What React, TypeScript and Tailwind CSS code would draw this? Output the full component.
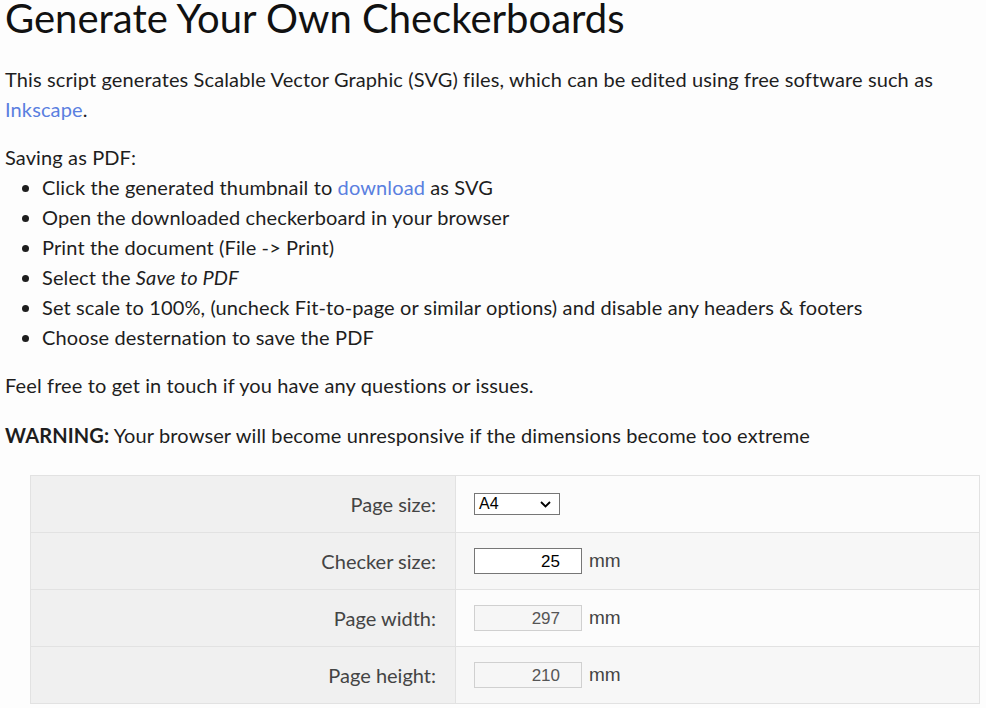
import React from "react";

function Row({ label, children, odd }: { label: string; children: React.ReactNode; odd: boolean }) {
  return (
    <tr className="h-[57px]">
      <td className="w-[425px] border border-[#e2e2e2] bg-[#f0f0f0] pr-[19px] text-right tracking-normal text-[#444]">{label}</td>
      <td className={`border border-[#e2e2e2] pl-[18px] ${odd ? "bg-[#f7f7f7]" : "bg-[#fcfcfc]"}`}>{children}</td>
    </tr>
  );
}

export default function App() {
  return (
    <div className="min-h-screen overflow-hidden bg-[#fdfdfd] font-['Lato',sans-serif] text-[20px] leading-[30px] text-[#1e1e1e]">
      <div className="pl-[5px] tracking-[0.12px]">
        <h1 className="text-[40px] leading-[36px] font-normal tracking-normal text-[#111]">Generate Your Own Checkerboards</h1>
        <p className="mt-[28px]">
          This script generates Scalable Vector Graphic (SVG) files, which can be edited using free software such as
          <br />
          <a className="text-[#5a7fe0]">Inkscape</a>.
        </p>
        <div className="mt-[18px]">Saving as PDF:</div>
        <ul className="list-disc pl-[37px]">
          <li>
            Click the generated thumbnail to <a className="text-[#5a7fe0]">download</a> as SVG
          </li>
          <li>Open the downloaded checkerboard in your browser</li>
          <li>Print the document (File -&gt; Print)</li>
          <li>
            Select the <i>Save to PDF</i>
          </li>
          <li>Set scale to 100%, (uncheck Fit-to-page or similar options) and disable any headers &amp; footers</li>
          <li>Choose desternation to save the PDF</li>
        </ul>
        <p className="mt-[18px]">Feel free to get in touch if you have any questions or issues.</p>
        <p className="mt-[20px]">
          <b>WARNING:</b> Your browser will become unresponsive if the dimensions become too extreme
        </p>
      </div>
      <table className="mt-[25px] ml-[30px] w-[950px] border-collapse border border-[#e2e2e2]">
        <tbody>
          <Row label="Page size:" odd={false}>
            <div className="flex h-[22px] w-[86px] items-center justify-between border border-[#767676] bg-white pl-[4px] pr-[8px] font-['Liberation_Sans',sans-serif] text-[16px] leading-none text-black">
              <span>A4</span>
              <svg width="11" height="7" viewBox="0 0 11 7">
                <path d="M1 1l4.5 4.5L10 1" fill="none" stroke="#000" strokeWidth="1.8" />
              </svg>
            </div>
          </Row>
          <Row label="Checker size:" odd={true}>
            <div className="flex items-center gap-[7px]">
              <div className="flex h-[26px] w-[108px] items-center justify-end border border-[#767676] bg-white pr-[21px] font-['Liberation_Sans',sans-serif] text-[17px] leading-none text-black">25</div>
              <span className="font-['Liberation_Sans',sans-serif] text-[19px] text-[#444]">mm</span>
            </div>
          </Row>
          <Row label="Page width:" odd={false}>
            <div className="flex items-center gap-[7px]">
              <div className="flex h-[26px] w-[108px] items-center justify-end border border-[#d0d0d0] bg-[#f6f6f6] pr-[21px] font-['Liberation_Sans',sans-serif] text-[17px] leading-none text-[#555]">297</div>
              <span className="font-['Liberation_Sans',sans-serif] text-[19px] text-[#444]">mm</span>
            </div>
          </Row>
          <Row label="Page height:" odd={true}>
            <div className="flex items-center gap-[7px]">
              <div className="flex h-[26px] w-[108px] items-center justify-end border border-[#d0d0d0] bg-[#f6f6f6] pr-[21px] font-['Liberation_Sans',sans-serif] text-[17px] leading-none text-[#555]">210</div>
              <span className="font-['Liberation_Sans',sans-serif] text-[19px] text-[#444]">mm</span>
            </div>
          </Row>
        </tbody>
      </table>
    </div>
  );
}
